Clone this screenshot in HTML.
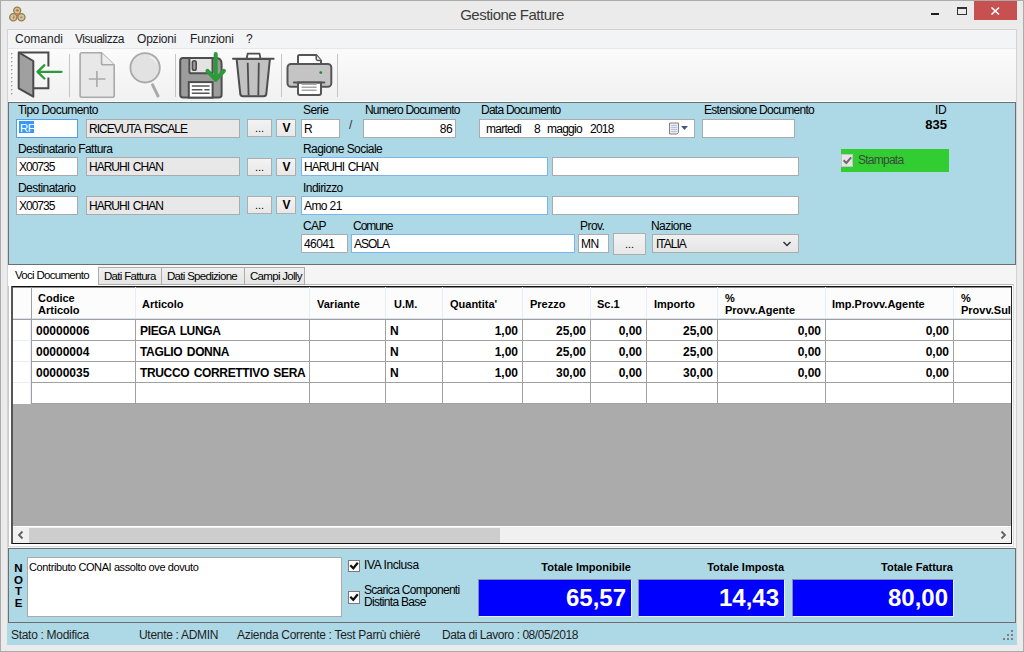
<!DOCTYPE html>
<html><head><meta charset="utf-8">
<style>
*{margin:0;padding:0;box-sizing:border-box}
html,body{width:1024px;height:652px;overflow:hidden;background:#ebebeb;font-family:"Liberation Sans",sans-serif;font-size:11px;color:#000}
.a{position:absolute}
svg{position:absolute;overflow:visible}
.title{left:0;top:6px;width:1024px;text-align:center;font-size:15px;letter-spacing:-0.5px;color:#3c3c3c}
.menu{left:8px;top:30px;width:1008px;height:19px;background:#f3f4f6;border-bottom:1px solid #e6e7e9}
.menu span{position:absolute;top:2px;font-size:12px;color:#1e1e1e}
.tool{left:8px;top:49px;width:1008px;height:52px;background:linear-gradient(#fbfbfb,#f1f1f1)}
.bp{background:#add8e6}
.lbl{position:absolute;font-size:12px;letter-spacing:-0.55px;color:#000;white-space:nowrap;line-height:12px}
.tb{position:absolute;height:19px;background:#fff;border:1px solid #ababab;font-size:12px;letter-spacing:-0.6px;line-height:18px;padding-left:2px;white-space:nowrap;overflow:hidden}
.tbd{background:#e8e8e8}
.btn{position:absolute;height:18px;background:linear-gradient(#f3f3f3,#e8e8e8);border:1px solid #adadad;text-align:center;font-size:11px;line-height:16px}
.tab{position:absolute;top:267px;height:18px;background:linear-gradient(#f0f0f0,#e5e5e5);border:1px solid #acacac;font-size:11.5px;letter-spacing:-0.7px;line-height:16px;padding-left:5px;white-space:nowrap}
.gh{position:absolute;font-weight:bold;font-size:11px;line-height:12px;letter-spacing:0;white-space:nowrap}
.gd{position:absolute;font-weight:bold;font-size:12px;line-height:12px;letter-spacing:0;word-spacing:1.5px;white-space:nowrap}
.st{position:absolute;top:628px;font-size:12px;letter-spacing:-0.3px;color:#1e1e1e;white-space:nowrap}
.tot{position:absolute;top:562px;font-weight:bold;font-size:11px;letter-spacing:0;text-align:right;white-space:nowrap}
.big{position:absolute;top:579px;height:38px;background:#0000ff;border-top:1px solid #8a8ab0;border-left:1px solid #8a8ab0;border-bottom:1px solid #e8f4f8;border-right:1px solid #e8f4f8;color:#fff;font-weight:bold;font-size:24px;text-align:right;line-height:36px;padding-right:5px}
</style></head><body>
<div class="a" style="left:0;top:0;width:1024px;height:652px;border:1px solid #ababab;background:#ebebeb"></div>
<!-- app icon -->
<svg style="left:0;top:0" width="30" height="26" viewBox="0 0 30 26">
 <g fill="#c2c6b0" stroke="#9a7d45" stroke-width="1.3">
 <circle cx="17.2" cy="10.6" r="3.5"/><circle cx="13.3" cy="17.2" r="3.6"/><circle cx="21.4" cy="17.2" r="3.6"/>
 </g>
 <g fill="#f26414">
 <path d="M15.8 9.8 Q17.5 8.2 19.2 10.6 Q17.5 12.2 15.8 11 Z"/>
 <path d="M13.6 15.2 Q15.5 16.6 13.8 19.2 Q12.6 17.8 13.6 15.2 Z"/>
 <path d="M19.8 17.3 Q21.5 15.6 22.8 17.5 Q21.3 18.6 19.8 17.3 Z"/>
 <circle cx="17.2" cy="15.2" r="0.9"/>
 </g>
</svg>
<div class="a title">Gestione Fatture</div>
<!-- caption buttons -->
<div class="a" style="left:931px;top:13px;width:8px;height:2px;background:#1e1e1e"></div>
<div class="a" style="left:957px;top:7px;width:10px;height:8px;border:1px solid #333;border-top-width:2px"></div>
<div class="a" style="left:974px;top:1px;width:43px;height:19px;background:#c75050"></div>
<svg style="left:974px;top:1px" width="43" height="19" viewBox="0 0 43 19"><path d="M17.5 6.5 L25 13.5 M25 6.5 L17.5 13.5" stroke="#fff" stroke-width="1.6"/></svg>
<!-- client frame -->
<div class="a" style="left:7px;top:29px;width:1010px;height:616px;background:#f0f0f0;border:1px solid #d2d2d2"></div>
<div class="a menu">
 <span style="left:7px">Comandi</span>
 <span style="left:67px;letter-spacing:-0.5px">Visualizza</span>
 <span style="left:129px;letter-spacing:-0.2px">Opzioni</span>
 <span style="left:182px;letter-spacing:-0.2px">Funzioni</span>
 <span style="left:238px">?</span>
</div>
<div class="a tool"></div>
<div class="a" style="left:8px;top:101px;width:1008px;height:1px;background:#fff"></div>
<!-- toolbar grip -->
<svg style="left:10px;top:52px" width="4" height="44" viewBox="0 0 4 44">
 <g fill="#a0a0a0"><rect x="1" y="1" width="1.4" height="1.4"/><rect x="1" y="5" width="1.4" height="1.4"/><rect x="1" y="9" width="1.4" height="1.4"/><rect x="1" y="13" width="1.4" height="1.4"/><rect x="1" y="17" width="1.4" height="1.4"/><rect x="1" y="21" width="1.4" height="1.4"/><rect x="1" y="25" width="1.4" height="1.4"/><rect x="1" y="29" width="1.4" height="1.4"/><rect x="1" y="33" width="1.4" height="1.4"/><rect x="1" y="37" width="1.4" height="1.4"/><rect x="1" y="41" width="1.4" height="1.4"/></g>
</svg>
<!-- separators -->
<div class="a" style="left:69px;top:54px;width:1px;height:43px;background:#c4c4c4"></div>
<div class="a" style="left:175px;top:54px;width:1px;height:43px;background:#c4c4c4"></div>
<div class="a" style="left:281px;top:54px;width:1px;height:43px;background:#c4c4c4"></div>
<div class="a" style="left:337px;top:54px;width:1px;height:43px;background:#c4c4c4"></div>
<!-- door icon -->
<svg style="left:0;top:0" width="1024" height="110" viewBox="0 0 1024 110">
 <g fill="none" stroke="#4a4a4a" stroke-width="2" stroke-linejoin="miter">
  <path d="M18.7 52.4 H48.4 V66.6 M48.4 77.4 V88.2 H33.3"/>
 </g>
 <path d="M18.7 52.4 L33.3 61 L33.3 96.7 L18.7 88.3 Z" fill="#a0a0a0" stroke="#4a4a4a" stroke-width="2" stroke-linejoin="round"/>
 <g fill="none" stroke="#2a9a3a" stroke-width="2.3" stroke-linecap="round" stroke-linejoin="round">
  <path d="M37.5 71.8 H61.5 M44.4 65.2 L37.5 71.8 L44.4 78.5"/>
 </g>
 <!-- new doc (disabled) -->
 <path d="M82 52.8 H101.5 L114.2 65 V95.5 Q114.2 97.2 112.5 97.2 H81.8 Q80.1 97.2 80.1 95.5 V54.5 Q80.1 52.8 82 52.8 Z" fill="#e8e8e8" stroke="#a9a9a9" stroke-width="1.6"/>
 <path d="M101.5 52.8 V63 Q101.5 64.8 103.3 64.8 H114.2" fill="#ececec" stroke="#a9a9a9" stroke-width="1.6"/>
 <path d="M88.8 79 H105.5 M96.9 70.9 V87.1" stroke="#a9a9a9" stroke-width="1.6" fill="none"/>
 <!-- magnifier -->
 <circle cx="145.1" cy="67.8" r="14.7" fill="#e2e2e2" stroke="#a9a9a9" stroke-width="1.8"/>
 <path d="M152.6 84.8 L158 96" stroke="#a9a9a9" stroke-width="3" stroke-linecap="round"/>
 <path d="M150.3 57.3 Q155 58.6 156.6 62.6" fill="none" stroke="#f8f8f8" stroke-width="1.1" stroke-linecap="round"/>
 <!-- floppy -->
 <path d="M183 58 H216 Q221.6 58 221.6 64 V94.8 Q221.6 97.6 218.8 97.6 H183 Q180.2 97.6 180.2 94.8 V60.8 Q180.2 58 183 58 Z" fill="#9c9c9c" stroke="#4d4d4d" stroke-width="2"/>
 <path d="M189.4 58 V71.4 Q189.4 73.3 191.3 73.3 H210.6 Q212.5 73.3 212.5 71.4 V58 Z" fill="#e3e3e3" stroke="#4d4d4d" stroke-width="2"/>
 <rect x="192.4" y="60.8" width="3.8" height="9.5" rx="1.8" fill="#9c9c9c" stroke="#4d4d4d" stroke-width="1.6"/>
 <rect x="188.8" y="82.1" width="23.8" height="15.5" fill="#fff" stroke="#4d4d4d" stroke-width="2"/>
 <path d="M191.8 86.1 H209.6 M191.8 89.7 H202.4 M204.4 89.7 H209.6 M191.8 93.2 H209.6" stroke="#555" stroke-width="1.5"/>
 <path d="M215.7 54 V79.5 M207.5 70.8 L215.7 79.8 L223.9 70.8" fill="none" stroke="#2a9a3a" stroke-width="4" stroke-linecap="round" stroke-linejoin="round"/>
 <!-- trash -->
 <path d="M246.8 58 L247.7 53.6 H259.5 L260.4 58" fill="#fff" stroke="#4d4d4d" stroke-width="1.8" stroke-linejoin="round"/>
 <path d="M236.6 59 H269.9 L266.3 94 Q266 96.2 263.8 96.2 H242.8 Q240.6 96.2 240.3 94 Z" fill="#c2c2c2" stroke="#4d4d4d" stroke-width="2" stroke-linejoin="round"/>
 <path d="M233 58.8 H273.6" stroke="#4d4d4d" stroke-width="2" stroke-linecap="round"/>
 <path d="M247.7 62.8 L248.6 95.5 M258.8 62.8 L258.3 95.5" stroke="#4d4d4d" stroke-width="1.8"/>
 <!-- printer -->
 <path d="M298 64 V56.5 Q298 55 299.5 55 H316.2 L321 60.6 V64" fill="#fff" stroke="#555" stroke-width="2" stroke-linejoin="round"/>
 <path d="M316.2 55.2 V58.8 Q316.2 60.4 317.8 60.4 H321" fill="#eee" stroke="#555" stroke-width="1.5"/>
 <rect x="287.5" y="64" width="43.8" height="22.8" rx="3.5" fill="#c4c4c4" stroke="#555" stroke-width="2"/>
 <circle cx="320.8" cy="72.6" r="1.4" fill="#1f8a2a"/>
 <path d="M298 82.5 V93 Q298 95 300 95 H319 Q321 95 321 93 V82.5 Z" fill="#fff" stroke="#555" stroke-width="2" stroke-linejoin="round"/>
 <path d="M293.9 82.5 H324.4" stroke="#555" stroke-width="2" stroke-linecap="round"/>
 <path d="M301.6 84.3 H316.7 M301.6 87.2 H316.7 M301.6 90.2 H316.7" stroke="#a8a8a8" stroke-width="1.4"/>
</svg>
<!-- top blue panel -->
<div class="a bp" style="left:8px;top:102px;width:1008px;height:163px;border:1px solid #6e6e6e"></div>
<div class="lbl" style="left:18px;top:104px">Tipo Documento</div>
<div class="tb" style="left:16px;top:119px;width:62px;border-color:#569de5"><div class="a" style="left:2px;top:1px;width:15px;height:12px;background:#3399ff;color:#fff;line-height:14px;padding-left:1px;font-size:11.5px;letter-spacing:-0.6px;overflow:visible">RF</div></div>
<div class="tb tbd" style="left:86px;top:119px;width:154px;letter-spacing:-1px;word-spacing:1.5px">RICEVUTA FISCALE</div>
<div class="btn" style="left:247px;top:119px;width:25px">...</div>
<div class="btn" style="left:276px;top:119px;width:20px;font-weight:bold;font-size:12px;padding-left:1px">V</div>
<div class="lbl" style="left:18px;top:143px">Destinatario Fattura</div>
<div class="tb" style="left:16px;top:157px;width:62px;letter-spacing:-1px;word-spacing:1.5px">X00735</div>
<div class="tb tbd" style="left:86px;top:157px;width:154px;letter-spacing:-1px;word-spacing:1.5px">HARUHI CHAN</div>
<div class="btn" style="left:247px;top:158px;width:25px">...</div>
<div class="btn" style="left:276px;top:158px;width:20px;font-weight:bold;font-size:12px;padding-left:1px">V</div>
<div class="lbl" style="left:18px;top:182px">Destinatario</div>
<div class="tb" style="left:16px;top:196px;width:62px;letter-spacing:-1px;word-spacing:1.5px">X00735</div>
<div class="tb tbd" style="left:86px;top:196px;width:154px;letter-spacing:-1px;word-spacing:1.5px">HARUHI CHAN</div>
<div class="btn" style="left:247px;top:196px;width:25px">...</div>
<div class="btn" style="left:276px;top:196px;width:20px;font-weight:bold;font-size:12px;padding-left:1px">V</div>

<div class="lbl" style="left:303px;top:104px">Serie</div>
<div class="tb" style="left:301px;top:119px;width:39px">R</div>
<div class="lbl" style="left:349px;top:119px;color:#333">/</div>
<div class="lbl" style="left:365px;top:104px;letter-spacing:-0.8px">Numero Documento</div>
<div class="tb" style="left:363px;top:119px;width:93px;text-align:right;padding-right:3px">86</div>
<div class="lbl" style="left:481px;top:104px;letter-spacing:-0.75px">Data Documento</div>
<div class="tb" style="left:479px;top:119px;width:216px;letter-spacing:-0.75px">
 <span class="a" style="left:6px;top:0">martedì</span><span class="a" style="left:54px;top:0">8</span><span class="a" style="left:67px;top:0">maggio</span><span class="a" style="left:110px;top:0">2018</span>
</div>
<svg style="left:668px;top:121px" width="22" height="14" viewBox="0 0 22 14">
 <path d="M1.5 2 H10.5 V11.5 L9 13 H1.5 Z" fill="#e6ecf5" stroke="#8a8080" stroke-width="1"/>
 <path d="M3 4.5 H9 M3 6.5 H9 M3 8.5 H9 M3 10.5 H9" stroke="#b0b8c8" stroke-width="0.8"/>
 <path d="M13 5 H20 L16.5 9 Z" fill="#3d5a8a"/>
</svg>
<div class="lbl" style="left:704px;top:104px;letter-spacing:-0.7px">Estensione Documento</div>
<div class="tb" style="left:702px;top:119px;width:93px"></div>
<div class="lbl" style="left:900px;top:104px;width:46px;text-align:right">ID</div>
<div class="lbl" style="left:880px;top:119px;width:67px;text-align:right;font-weight:bold;font-size:13px;letter-spacing:0">835</div>

<div class="lbl" style="left:303px;top:143px">Ragione Sociale</div>
<div class="tb" style="left:301px;top:157px;width:247px;border-color:#7eb4ea;letter-spacing:-1px;word-spacing:1.5px">HARUHI CHAN</div>
<div class="tb" style="left:552px;top:157px;width:247px"></div>
<div class="a" style="left:841px;top:149px;width:108px;height:23px;background:#32cd32"></div>
<div class="a" style="left:841px;top:154px;width:12px;height:13px;background:#e6e6e6;border:1px solid #c4c4c4"></div>
<svg style="left:841px;top:154px" width="13" height="13" viewBox="0 0 13 13"><path d="M2.6 6.3 L5.3 9 L10.2 3.3" fill="none" stroke="#6a6a6a" stroke-width="2"/></svg>
<div class="lbl" style="left:858px;top:154px;color:#3a4a3a;letter-spacing:-0.75px">Stampata</div>

<div class="lbl" style="left:303px;top:182px">Indirizzo</div>
<div class="tb" style="left:301px;top:196px;width:247px;border-color:#7eb4ea">Amo 21</div>
<div class="tb" style="left:552px;top:196px;width:247px"></div>

<div class="lbl" style="left:303px;top:220px">CAP</div>
<div class="tb" style="left:301px;top:234px;width:47px">46041</div>
<div class="lbl" style="left:353px;top:220px;letter-spacing:-1px">Comune</div>
<div class="tb" style="left:351px;top:234px;width:224px;border-color:#7eb4ea;letter-spacing:-1px;word-spacing:1.5px">ASOLA</div>
<div class="lbl" style="left:580px;top:220px">Prov.</div>
<div class="tb" style="left:578px;top:234px;width:31px">MN</div>
<div class="btn" style="left:613px;top:233px;width:33px;height:22px;line-height:20px">...</div>
<div class="lbl" style="left:651px;top:220px">Nazione</div>
<div class="tb" style="left:652px;top:234px;width:147px;background:linear-gradient(#f0f0f0,#e5e5e5);padding-left:3px;letter-spacing:-1px;word-spacing:1.5px">ITALIA</div>
<svg style="left:782px;top:240px" width="10" height="8" viewBox="0 0 10 8"><path d="M1.5 2 L5 5.5 L8.5 2" fill="none" stroke="#333" stroke-width="1.5"/></svg>
<!-- tab control -->
<div class="a" style="left:8px;top:265px;width:1008px;height:283px;background:#f5f5f5"></div>
<div class="a" style="left:8px;top:284px;width:1006px;height:263px;background:#fff;border-top:1px solid #b8b8b8;border-right:1px solid #dcdcdc;border-bottom:1px solid #dcdcdc;border-left:1px solid #c8c8c8"></div>
<div class="a" style="left:8px;top:265px;width:90px;height:21px;background:#fff"></div>
<div class="lbl" style="left:15px;top:269px;font-size:11.5px;letter-spacing:-0.7px">Voci Documento</div>
<div class="tab" style="left:98px;width:64px">Dati Fattura</div>
<div class="tab" style="left:161px;width:84px">Dati Spedizione</div>
<div class="tab" style="left:244px;width:61px">Campi Jolly</div>
<!-- grid border -->
<div class="a" style="left:11px;top:286px;width:1001px;height:258px;background:#ababab;border-top:1px solid #111;border-left:2px solid #555;border-right:1px solid #222;border-bottom:1px solid #111"></div>
<div class="a" style="left:13px;top:287px;width:998px;height:1px;background:#8c8c8c"></div>
<!-- scrollbar -->
<div class="a" style="left:13px;top:526px;width:998px;height:1px;background:#fff"></div>
<div class="a" style="left:13px;top:527px;width:998px;height:16px;background:#f0f0f0"></div>
<div class="a" style="left:29px;top:528px;width:471px;height:15px;background:#cdcdcd"></div>
<svg style="left:13px;top:527px" width="16" height="16" viewBox="0 0 16 16"><path d="M9.5 4.5 L6 8 L9.5 11.5" fill="none" stroke="#606060" stroke-width="1.8"/></svg>
<svg style="left:995px;top:527px" width="16" height="16" viewBox="0 0 16 16"><path d="M6.5 4.5 L10 8 L6.5 11.5" fill="none" stroke="#606060" stroke-width="1.8"/></svg>
<div class="a" style="left:0;top:0;width:1011px;height:543px;overflow:hidden">
<div class="a" style="left:13px;top:288px;width:998px;height:31px;background:#fcfcfc"></div>
<div class="a" style="left:13px;top:318px;width:998px;height:1px;background:#d8e2ed"></div>
<div class="a" style="left:13px;top:319px;width:998px;height:85px;background:#fff"></div>
<div class="a" style="left:31px;top:319px;width:980px;height:1px;background:#a0a0a0"></div>
<div class="a" style="left:31px;top:340px;width:980px;height:1px;background:#a0a0a0"></div>
<div class="a" style="left:31px;top:361px;width:980px;height:1px;background:#a0a0a0"></div>
<div class="a" style="left:31px;top:382px;width:980px;height:1px;background:#a0a0a0"></div>
<div class="a" style="left:31px;top:403px;width:980px;height:1px;background:#a0a0a0"></div>
<div class="a" style="left:13px;top:340px;width:17px;height:1px;background:#e6eef8"></div>
<div class="a" style="left:13px;top:361px;width:17px;height:1px;background:#e6eef8"></div>
<div class="a" style="left:13px;top:382px;width:17px;height:1px;background:#e6eef8"></div>
<div class="a" style="left:31px;top:287px;width:1px;height:32px;background:#a0a0a0"></div>
<div class="a" style="left:31px;top:319px;width:1px;height:85px;background:#a0a0a0"></div><div class="a" style="left:30px;top:320px;width:1px;height:84px;background:#e3ecf7"></div>
<div class="a" style="left:135px;top:287px;width:1px;height:31px;background:#e3ecf7"></div>
<div class="a" style="left:135px;top:319px;width:1px;height:85px;background:#a0a0a0"></div>
<div class="a" style="left:309px;top:287px;width:1px;height:31px;background:#e3ecf7"></div>
<div class="a" style="left:309px;top:319px;width:1px;height:85px;background:#a0a0a0"></div>
<div class="a" style="left:385px;top:287px;width:1px;height:31px;background:#e3ecf7"></div>
<div class="a" style="left:385px;top:319px;width:1px;height:85px;background:#a0a0a0"></div>
<div class="a" style="left:442px;top:287px;width:1px;height:31px;background:#e3ecf7"></div>
<div class="a" style="left:442px;top:319px;width:1px;height:85px;background:#a0a0a0"></div>
<div class="a" style="left:522px;top:287px;width:1px;height:31px;background:#e3ecf7"></div>
<div class="a" style="left:522px;top:319px;width:1px;height:85px;background:#a0a0a0"></div>
<div class="a" style="left:590px;top:287px;width:1px;height:31px;background:#e3ecf7"></div>
<div class="a" style="left:590px;top:319px;width:1px;height:85px;background:#a0a0a0"></div>
<div class="a" style="left:646px;top:287px;width:1px;height:31px;background:#e3ecf7"></div>
<div class="a" style="left:646px;top:319px;width:1px;height:85px;background:#a0a0a0"></div>
<div class="a" style="left:717px;top:287px;width:1px;height:31px;background:#e3ecf7"></div>
<div class="a" style="left:717px;top:319px;width:1px;height:85px;background:#a0a0a0"></div>
<div class="a" style="left:825px;top:287px;width:1px;height:31px;background:#e3ecf7"></div>
<div class="a" style="left:825px;top:319px;width:1px;height:85px;background:#a0a0a0"></div>
<div class="a" style="left:953px;top:287px;width:1px;height:31px;background:#e3ecf7"></div>
<div class="a" style="left:953px;top:319px;width:1px;height:85px;background:#a0a0a0"></div>
<div class="gh" style="left:38px;top:292px">Codice<br>Articolo</div>
<div class="gh" style="left:142px;top:298px">Articolo</div>
<div class="gh" style="left:317px;top:298px">Variante</div>
<div class="gh" style="left:394px;top:298px">U.M.</div>
<div class="gh" style="left:450px;top:298px">Quantita'</div>
<div class="gh" style="left:530px;top:298px">Prezzo</div>
<div class="gh" style="left:597px;top:298px">Sc.1</div>
<div class="gh" style="left:654px;top:298px">Importo</div>
<div class="gh" style="left:725px;top:292px">%<br>Provv.Agente</div>
<div class="gh" style="left:832px;top:298px">Imp.Provv.Agente</div>
<div class="gh" style="left:961px;top:292px">%<br>Provv.Sul</div>
<div class="gd" style="left:36px;top:325px;">00000006</div>
<div class="gd" style="left:140px;top:325px;letter-spacing:-0.35px;">PIEGA LUNGA</div>
<div class="gd" style="left:390px;top:325px;letter-spacing:-0.35px;">N</div>
<div class="gd" style="left:443px;top:325px;width:75px;text-align:right;">1,00</div>
<div class="gd" style="left:523px;top:325px;width:63px;text-align:right;">25,00</div>
<div class="gd" style="left:591px;top:325px;width:51px;text-align:right;">0,00</div>
<div class="gd" style="left:647px;top:325px;width:66px;text-align:right;">25,00</div>
<div class="gd" style="left:718px;top:325px;width:103px;text-align:right;">0,00</div>
<div class="gd" style="left:826px;top:325px;width:123px;text-align:right;">0,00</div>
<div class="gd" style="left:36px;top:346px;">00000004</div>
<div class="gd" style="left:140px;top:346px;letter-spacing:-0.35px;">TAGLIO DONNA</div>
<div class="gd" style="left:390px;top:346px;letter-spacing:-0.35px;">N</div>
<div class="gd" style="left:443px;top:346px;width:75px;text-align:right;">1,00</div>
<div class="gd" style="left:523px;top:346px;width:63px;text-align:right;">25,00</div>
<div class="gd" style="left:591px;top:346px;width:51px;text-align:right;">0,00</div>
<div class="gd" style="left:647px;top:346px;width:66px;text-align:right;">25,00</div>
<div class="gd" style="left:718px;top:346px;width:103px;text-align:right;">0,00</div>
<div class="gd" style="left:826px;top:346px;width:123px;text-align:right;">0,00</div>
<div class="gd" style="left:36px;top:367px;">00000035</div>
<div class="gd" style="left:140px;top:367px;letter-spacing:-0.35px;">TRUCCO CORRETTIVO SERA</div>
<div class="gd" style="left:390px;top:367px;letter-spacing:-0.35px;">N</div>
<div class="gd" style="left:443px;top:367px;width:75px;text-align:right;">1,00</div>
<div class="gd" style="left:523px;top:367px;width:63px;text-align:right;">30,00</div>
<div class="gd" style="left:591px;top:367px;width:51px;text-align:right;">0,00</div>
<div class="gd" style="left:647px;top:367px;width:66px;text-align:right;">30,00</div>
<div class="gd" style="left:718px;top:367px;width:103px;text-align:right;">0,00</div>
<div class="gd" style="left:826px;top:367px;width:123px;text-align:right;">0,00</div>
<div class="a" style="left:13px;top:319px;width:18px;height:1px;background:#a0a0a0"></div>
</div><!-- bottom blue panel -->
<div class="a bp" style="left:8px;top:548px;width:1008px;height:75px;border:1px solid #6e6e6e"></div>
<div class="a" style="left:13px;top:563px;width:11px;font-weight:bold;font-size:11.5px;line-height:11.7px;text-align:center">N<br>O<br>T<br>E</div>
<div class="a" style="left:27px;top:557px;width:315px;height:60px;background:#fff;border:1px solid #ababab"></div>
<div class="lbl" style="left:29px;top:561px;font-size:11px;letter-spacing:-0.4px">Contributo CONAI assolto ove dovuto</div>
<div class="a" style="left:348px;top:560px;width:12px;height:12px;background:#fff;border:1px solid #7a7a7a"></div>
<svg style="left:348px;top:560px" width="13" height="13" viewBox="0 0 13 13"><path d="M2.3 5.3 L5.3 8.3 L9.8 2.8" fill="none" stroke="#111" stroke-width="2.2"/></svg>
<div class="lbl" style="left:364px;top:559px;letter-spacing:-0.4px">IVA Inclusa</div>
<div class="a" style="left:348px;top:591px;width:12px;height:13px;background:#fff;border:1px solid #7a7a7a"></div>
<svg style="left:348px;top:591px" width="13" height="13" viewBox="0 0 13 13"><path d="M2.3 5.8 L5.3 8.8 L9.8 3.3" fill="none" stroke="#111" stroke-width="2.2"/></svg>
<div class="lbl" style="left:364px;top:585px;line-height:11.5px;letter-spacing:-0.7px">Scarica Componenti<br>Distinta Base</div>
<div class="tot" style="left:480px;top:561px;width:151px">Totale Imponibile</div>
<div class="tot" style="left:640px;top:561px;width:144px">Totale Imposta</div>
<div class="tot" style="left:794px;top:561px;width:159px">Totale Fattura</div>
<div class="big" style="left:478px;width:154px">65,57</div>
<div class="big" style="left:638px;width:147px">14,43</div>
<div class="big" style="left:792px;width:162px">80,00</div>
<!-- status -->
<div class="a bp" style="left:7px;top:623px;width:1010px;height:22px"></div>
<div class="st" style="left:11px">Stato : Modifica</div>
<div class="st" style="left:139px">Utente : ADMIN</div>
<div class="st" style="left:237px">Azienda Corrente : Test Parrù chièré</div>
<div class="st" style="left:442px;letter-spacing:-0.45px">Data di Lavoro : 08/05/2018</div>
<svg style="left:1003px;top:630px" width="12" height="12" viewBox="0 0 12 12"><g fill="#808080"><rect x="8" y="0" width="2" height="2"/><rect x="4" y="4" width="2" height="2"/><rect x="8" y="4" width="2" height="2"/><rect x="0" y="8" width="2" height="2"/><rect x="4" y="8" width="2" height="2"/><rect x="8" y="8" width="2" height="2"/></g></svg>
</body></html>
